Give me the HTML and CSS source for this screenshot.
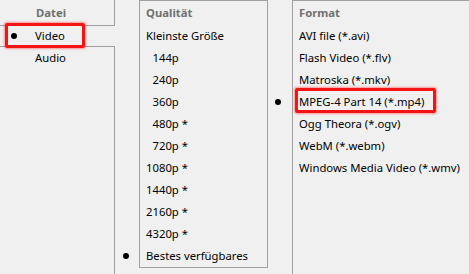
FILE: index.html
```html
<!DOCTYPE html>
<html lang="de">
<head>
<meta charset="utf-8">
<title>Download-Optionen</title>
<link rel="stylesheet" href="styles.css">
</head>
<body>
<div class="window">
  <section class="pane pane-file">
    <div class="head">Datei</div>
    <div class="item sel checked">Video<span class="mark mark-video"></span></div>
    <div class="rest">
      <div class="item">Audio</div>
    </div>
  </section>
  <section class="pane pane-quality">
    <div class="box">
      <div class="head">Qualität</div>
      <div class="item">Kleinste Größe</div>
      <div class="item">&#8199;144p</div>
      <div class="item">&#8199;240p</div>
      <div class="item">&#8199;360p</div>
      <div class="item">&#8199;480p *</div>
      <div class="item">&#8199;720p *</div>
      <div class="item">1080p *</div>
      <div class="item">1440p *</div>
      <div class="item">2160p *</div>
      <div class="item">4320p *</div>
      <div class="item checked">Bestes verfügbares</div>
    </div>
  </section>
  <section class="pane pane-format">
    <div class="head">Format</div>
    <div class="item">AVI file (*.avi)</div>
    <div class="item">Flash Video (*.flv)</div>
    <div class="item">Matroska (*.mkv)</div>
    <div class="item checked">MPEG-4 Part 14 (*.mp4)<span class="mark mark-format"></span></div>
    <div class="item">Ogg Theora (*.ogv)</div>
    <div class="item">WebM (*.webm)</div>
    <div class="item">Windows Media Video (*.wmv)</div>
  </section>
</div>
</body>
</html>
```

FILE: styles.css
```css
html, body {
  margin: 0;
  padding: 0;
  background: #f0f0f0;
}
body {
  font-family: "Noto Sans", "Open Sans", sans-serif;
  font-size: 11.3px;
  color: #000;
  overflow: hidden;
}
.window {
  display: flex;
  height: 274px;
  overflow: hidden;
}
.pane {
  display: flex;
  flex-direction: column;
  box-sizing: border-box;
}
.head {
  font-weight: bold;
  color: #707070;
  height: 24px;
  line-height: 24px;
  box-sizing: border-box;
  white-space: nowrap;
}
.item {
  position: relative;
  height: 22px;
  line-height: 22px;
  box-sizing: border-box;
  white-space: nowrap;
}
.checked::before {
  content: "";
  position: absolute;
  top: 8px;
  width: 6px;
  height: 6px;
  border-radius: 50%;
  background: #000;
}

/* Datei */
.pane-file {
  width: 139px;
  flex: none;
}
.pane-file .head {
  width: 115px;
  height: 25px;
  line-height: 25px;
  padding-left: 36px;
  border-right: 1px solid #a0a0a0;
}
.pane-file .sel {
  width: 115px;
  padding-left: 35px;
  border-top: 1px solid #a0a0a0;
  border-bottom: 1px solid #a0a0a0;
  line-height: 20px;
}
.pane-file .sel::before {
  left: 11px;
  top: 7px;
}
.pane-file .rest {
  flex: 1;
  width: 115px;
  box-sizing: border-box;
  border-right: 1px solid #a0a0a0;
}
.pane-file .rest .item {
  padding-left: 35px;
}

/* Qualität */
.pane-quality {
  width: 153px;
  flex: none;
}
.pane-quality .box {
  width: 129px;
  height: 268px;
  box-sizing: border-box;
  border: 1px solid #a0a0a0;
}
.pane-quality .head,
.pane-quality .item {
  padding-left: 6px;
}
.pane-quality .checked::before {
  left: -17px;
}

/* Format */
.pane-format {
  flex: 1;
  border-left: 1px solid #a0a0a0;
  border-top: 1px solid #a0a0a0;
}
.pane-format .head,
.pane-format .item {
  padding-left: 6px;
}
.pane-format .checked::before {
  left: -18px;
}

/* red annotation frames */
.mark {
  position: absolute;
  box-sizing: border-box;
  border: 3px solid #f41414;
  border-radius: 2px;
  box-shadow: 0 0 2px 1px rgba(255, 40, 40, 0.45);
  pointer-events: none;
}
.mark-video {
  left: 5px;
  top: -3px;
  width: 80px;
  height: 25px;
}
.mark-format {
  left: 2px;
  top: -3px;
  width: 141px;
  height: 25px;
}
```
